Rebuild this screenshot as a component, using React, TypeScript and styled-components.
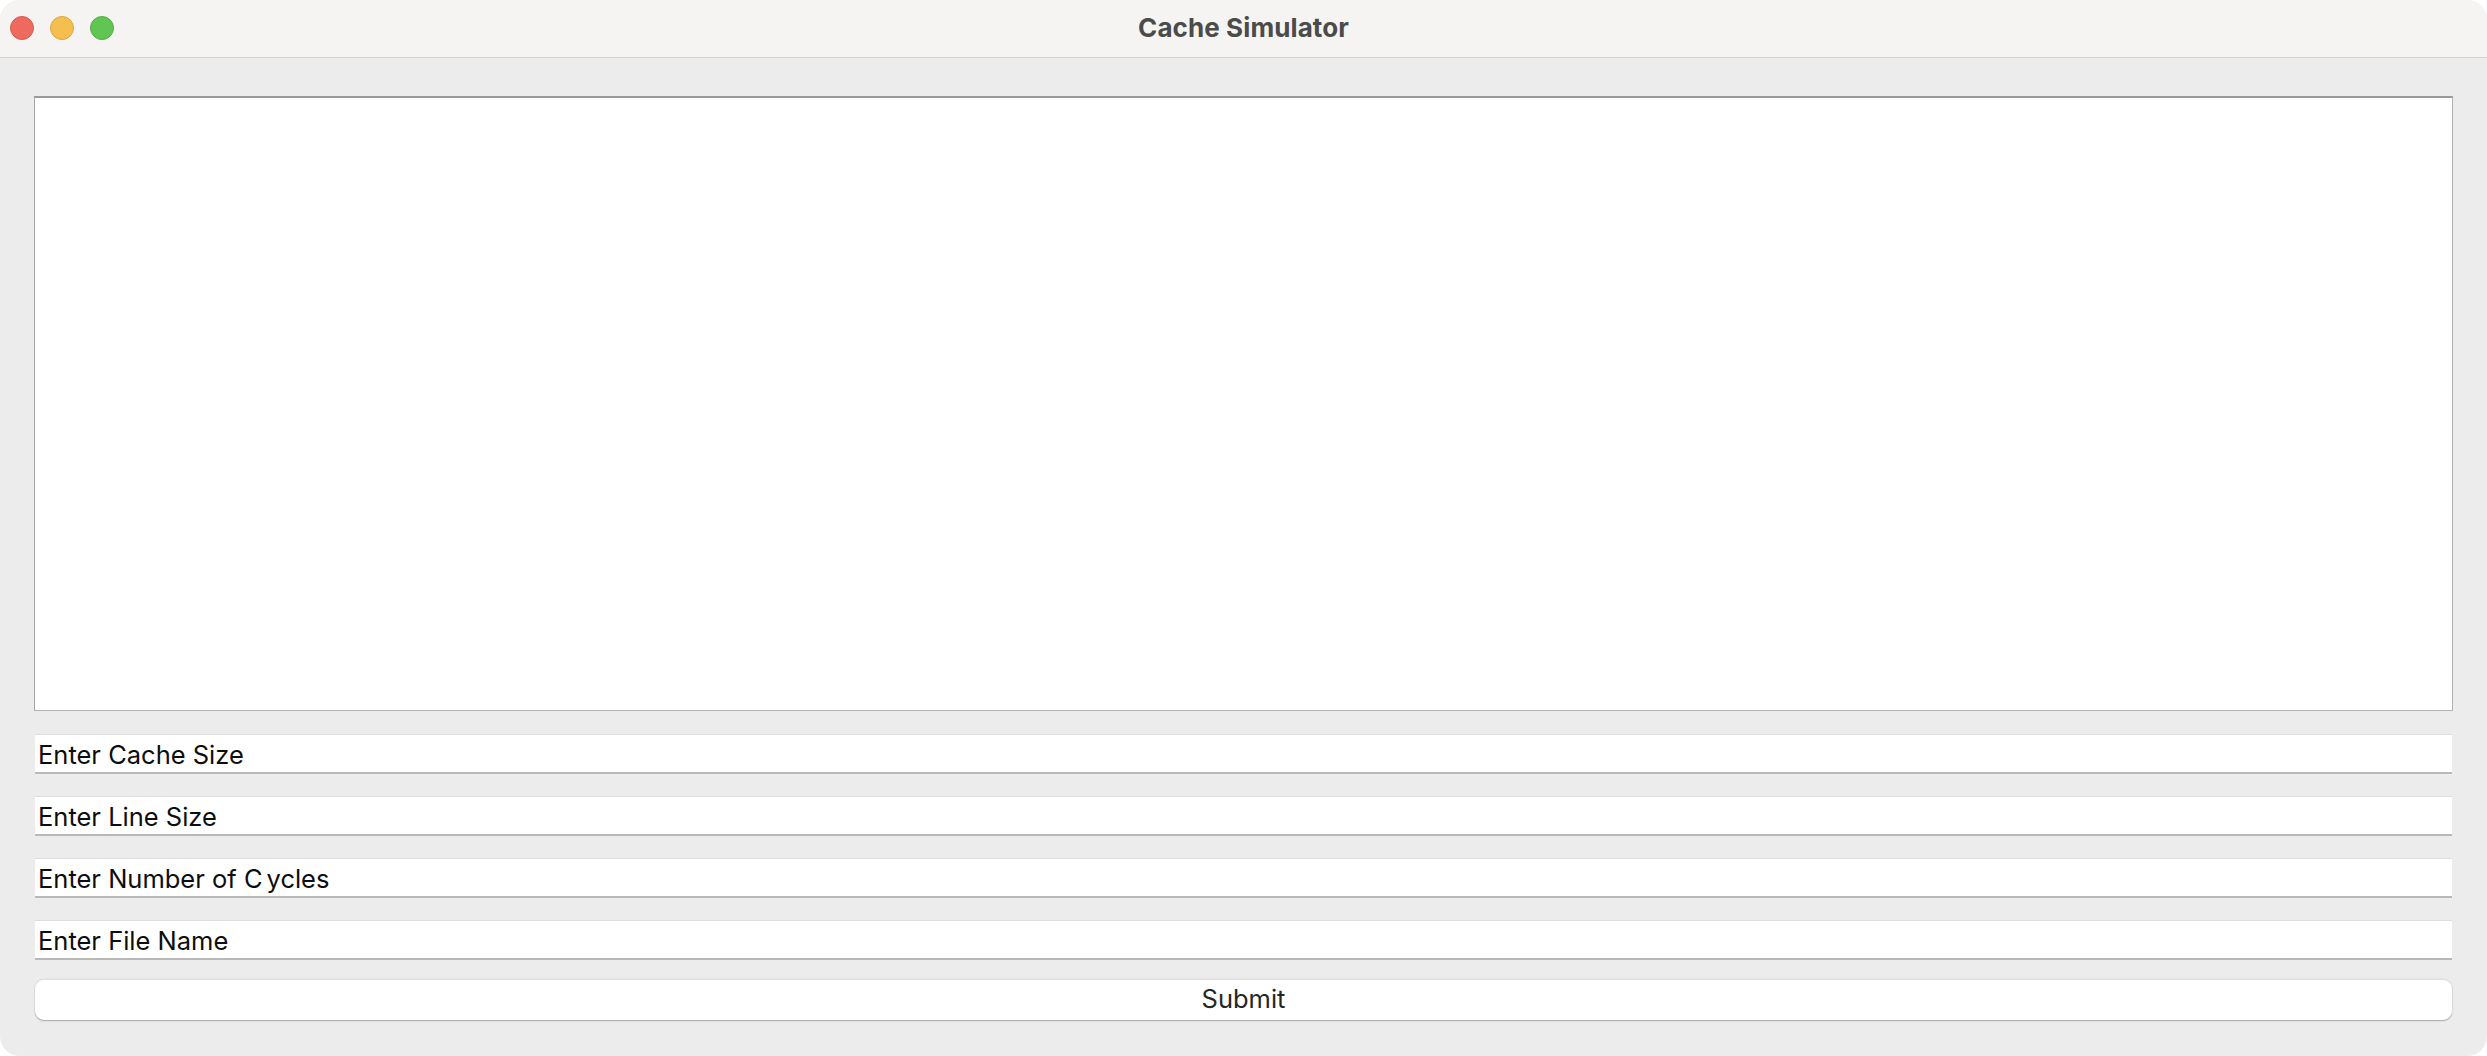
import React from "react";
import styled, { createGlobalStyle } from "styled-components";

const Global = createGlobalStyle`
  html, body { margin: 0; padding: 0; background: #ffffff; }
  * { box-sizing: border-box; }
`;

const Window = styled.div`
  width: 2487px;
  height: 1056px;
  border-radius: 20px;
  overflow: hidden;
  background: #ececec;
  display: flex;
  flex-direction: column;
  font-family: Inter, "Liberation Sans", sans-serif;
`;

const TitleBar = styled.div`
  height: 58px;
  flex: none;
  background: #f5f4f2;
  border-bottom: 1px solid #d2d1cf;
  display: grid;
  grid-template-columns: 1fr auto 1fr;
  align-items: center;
  padding: 0 10px 2px 10px;
`;

const Lights = styled.div`
  display: flex;
  gap: 16px;
  align-items: center;
`;

const Light = styled.span<{ $fill: string; $edge: string }>`
  width: 24px;
  height: 24px;
  border-radius: 50%;
  background: ${(p) => p.$fill};
  border: 1px solid ${(p) => p.$edge};
`;

const Title = styled.div`
  font-size: 26px;
  font-weight: 700;
  color: #4b4b4b;
  letter-spacing: 0.1px;
`;

const Content = styled.div`
  flex: 1;
  display: flex;
  flex-direction: column;
  padding: 38px 34px 0 34px;
`;

const Output = styled.div`
  height: 615px;
  flex: none;
  background: #ffffff;
  border-top: 2px solid #9a9a9a;
  border-left: 1px solid #a6a6a6;
  border-right: 1px solid #b4b4b4;
  border-bottom: 1px solid #b4b4b4;
`;

const Form = styled.div`
  display: flex;
  flex-direction: column;
  gap: 22px;
  margin-top: 23px;
  padding: 0 1px;
`;

const Field = styled.div`
  height: 40px;
  background: #ffffff;
  border-top: 1px solid #dedede;
  border-bottom: 2px solid #b9b9b9;
  display: flex;
  align-items: center;
  padding: 1px 3px 0 3px;
  font-size: 25.5px;
  color: #0d0d0d;
`;

const Gap = styled.span`
  margin-left: 4px;
`;

const SubmitButton = styled.div`
  margin: 19px 1px 0 1px;
  height: 41px;
  background: #ffffff;
  border-radius: 9px;
  border-top: 1px solid #e0e0e0;
  box-shadow: 0 1px 1.5px rgba(0, 0, 0, 0.28), 0 0 0 0.5px rgba(0, 0, 0, 0.06);
  display: flex;
  align-items: center;
  justify-content: center;
  padding-bottom: 3px;
  font-size: 25.5px;
  color: #262626;
`;

export default function App() {
  return (
    <>
      <Global />
      <Window>
        <TitleBar>
          <Lights>
            <Light $fill="#ee6a5e" $edge="#d65a4f" />
            <Light $fill="#f5bf4f" $edge="#dba53d" />
            <Light $fill="#61c554" $edge="#50ad44" />
          </Lights>
          <Title>Cache Simulator</Title>
          <div />
        </TitleBar>
        <Content>
          <Output />
          <Form>
            <Field>Enter Cache Size</Field>
            <Field>Enter Line Size</Field>
            <Field>
              Enter Number of C<Gap />ycles
            </Field>
            <Field>Enter File Name</Field>
          </Form>
          <SubmitButton>Submit</SubmitButton>
        </Content>
      </Window>
    </>
  );
}
